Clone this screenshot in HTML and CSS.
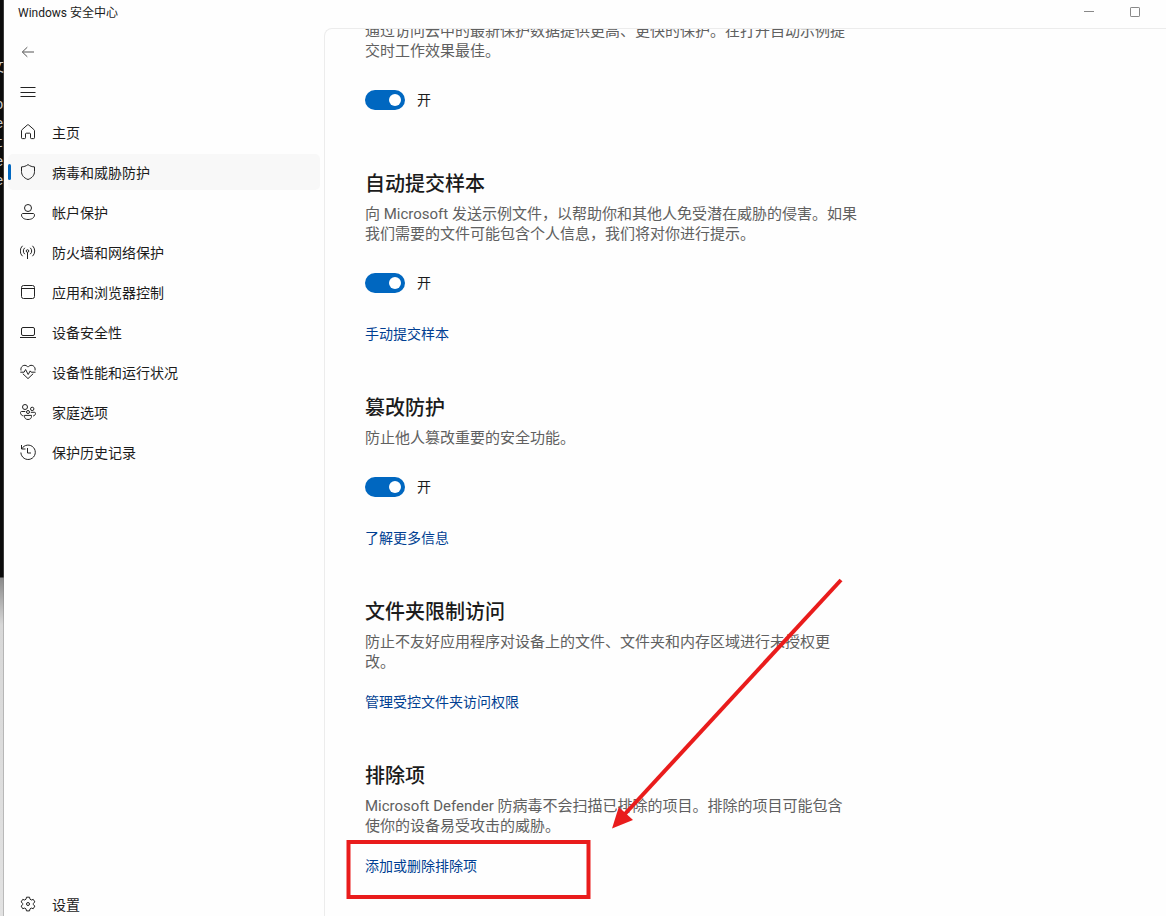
FILE: index.html
```
<!DOCTYPE html>
<html lang="zh-CN">

<head>
    <meta charset="UTF-8">
    <meta name="viewport" content="width=device-width, initial-scale=1.0">
    <title>Windows 安全中心</title>
    <link rel="stylesheet" href="styles.css">
</head>

<body>
    <!-- 窗口后面露出的终端 -->
    <div class="backdrop" aria-hidden="true">
        <div class="terminal">攵<br><br>o<br>e<br>t<br>e<br>e</div>
    </div>

    <div class="window">
        <header class="titlebar">
            <span class="titlebar-text">Windows 安全中心</span>
            <button class="caption-btn" type="button" aria-label="最小化">
                <svg width="10" height="10" viewBox="0 0 10 10"><path d="M0 4.5h10" /></svg>
            </button>
            <button class="caption-btn" type="button" aria-label="最大化">
                <svg width="10" height="10" viewBox="0 0 10 10"><rect x=".5" y=".5" width="9" height="9" rx=".6" /></svg>
            </button>
        </header>

        <div class="layout">
            <nav class="sidebar">
                <button class="nav-item back" type="button" aria-label="返回">
                    <svg class="icon" viewBox="0 0 16 16"><path d="M14 8H2.5M7.3 3.2 2.3 8l5 4.8" /></svg>
                </button>
                <button class="nav-item" type="button" aria-label="导航">
                    <svg class="icon" viewBox="0 0 16 16"><path d="M.5 3.5h15M.5 8.5h15M.5 12.5h15" /></svg>
                </button>
                <a class="nav-item" href="#">
                    <svg class="icon" viewBox="0 0 16 16"><path d="M1.5 6.8c0-.5.2-.9.6-1.2L7.300 1c.4-.4 1-.4 1.400 0l5.200 4.600c.4.3.6.7.6 1.200V13.800c0 .5-.3.8-.8.8h-2.400c-.5 0-.8-.3-.8-.8V10c0-.5-.3-.8-.8-.8H6.300c-.5 0-.8.3-.8.8v3.800c0 .5-.3.8-.8.8H2.300c-.5 0-.8-.3-.8-.8z" /></svg>
                    <span>主页</span>
                </a>
                <a class="nav-item active" href="#">
                    <svg class="icon" viewBox="0 0 16 16"><path d="M8 .6c2 1.500 4.100 2.200 6.500 2.300v4.600c0 3.700-2.200 6.400-6.500 8-4.300-1.600-6.500-4.300-6.500-8V2.900C3.900 2.800 6 2.100 8 .6z" /></svg>
                    <span>病毒和威胁防护</span>
                </a>
                <a class="nav-item" href="#">
                    <svg class="icon" viewBox="0 0 16 16"><circle cx="8" cy="4" r="3.500" /><path d="M3 9.500h10c.9 0 1.500.6 1.500 1.400 0 2.900-2.800 4.600-6.500 4.600s-6.500-1.700-6.500-4.600c0-.8.6-1.400 1.500-1.400z" /></svg>
                    <span>帐户保护</span>
                </a>
                <a class="nav-item" href="#">
                    <svg class="icon" viewBox="0 0 16 16"><circle cx="7.500" cy="7" r="1.300" /><path d="M7.500 8.300V15M4.800 10.200a4.200 4.200 0 0 1 0-6.400M10.200 10.200a4.200 4.200 0 0 0 0-6.400M2.500 12.200a7.200 7.200 0 0 1 0-10.400M12.500 12.200a7.200 7.200 0 0 0 0-10.400" /></svg>
                    <span>防火墙和网络保护</span>
                </a>
                <a class="nav-item" href="#">
                    <svg class="icon" viewBox="0 0 16 16"><rect x="1.500" y="1.500" width="13" height="13" rx="2" /><path d="M1.500 4.500h13" /></svg>
                    <span>应用和浏览器控制</span>
                </a>
                <a class="nav-item" href="#">
                    <svg class="icon" viewBox="0 0 16 16"><rect x="1.500" y="3.500" width="13" height="8" rx="1.500" /><path d="M0 13.500h16" /></svg>
                    <span>设备安全性</span>
                </a>
                <a class="nav-item" href="#">
                    <svg class="icon" viewBox="0 0 16 16"><path d="M1 6.500C0 2.500 4.500-.4 7.300 2.400l.7.700.7-.7C11.500-.4 16 2.500 15 6.500M2.800 9.700 8 14.600l5.200-4.900M.3 8.200h3.800l1.500-2.700 2.600 5 2-3.600 1 1.300h4.300" /></svg>
                    <span>设备性能和运行状况</span>
                </a>
                <a class="nav-item" href="#">
                    <svg class="icon" viewBox="0 0 16 16"><circle cx="5" cy="3" r="2.500" /><circle cx="12.200" cy="4.900" r="1.700" /><circle cx="8" cy="8" r="1.500" /><path d="M4.500 11.400h7v1c0 1.900-1.500 3.100-3.500 3.100s-3.500-1.200-3.500-3.100zM5.300 7.500H1.600c-.7 0-1.100.4-1.100 1 0 1.900 1.200 3.100 3 3.400M10.800 8.300h3.600c.7 0 1.100.4 1.100 1 0 1.500-.9 2.400-2.400 2.700" /></svg>
                    <span>家庭选项</span>
                </a>
                <a class="nav-item" href="#">
                    <svg class="icon" viewBox="0 0 16 16"><path d="M1.500 1v4h4M1.800 4.800A7.200 7.200 0 1 1 .9 8.500M7.500 4v5h3.500" /></svg>
                    <span>保护历史记录</span>
                </a>
                <a class="nav-item settings" href="#">
                    <svg class="icon" viewBox="0 0 16 16"><path d="M6.500 1.200h3l.5 2 1.300.8 2-.6 1.500 2.500-1.400 1.500v1.300l1.400 1.400-1.500 2.600-2-.6-1.300.8-.5 2h-3l-.5-2-1.300-.8-2 .6-1.500-2.600 1.400-1.400V7.400L1.200 5.900l1.500-2.500 2 .6L6 3.200z" /><circle cx="8" cy="8" r="1.500" /></svg>
                    <span>设置</span>
                </a>
            </nav>

            <main class="content">
                <section class="setting scrolled">
                    <p class="desc">通过访问云中的最新保护数据提供更高、更快的保护。在打开自动示例提交时工作效果最佳。</p>
                    <label class="toggle-row"><input class="toggle" type="checkbox" role="switch" checked>开</label>
                </section>

                <section class="setting">
                    <h2 class="heading">自动提交样本</h2>
                    <p class="desc">向 Microsoft 发送示例文件，以帮助你和其他人免受潜在威胁的侵害。如果我们需要的文件可能包含个人信息，我们将对你进行提示。</p>
                    <label class="toggle-row"><input class="toggle" type="checkbox" role="switch" checked>开</label>
                    <a class="link" href="#">手动提交样本</a>
                </section>

                <section class="setting">
                    <h2 class="heading">篡改防护</h2>
                    <p class="desc">防止他人篡改重要的安全功能。</p>
                    <label class="toggle-row"><input class="toggle" type="checkbox" role="switch" checked>开</label>
                    <a class="link" href="#">了解更多信息</a>
                </section>

                <section class="setting">
                    <h2 class="heading">文件夹限制访问</h2>
                    <p class="desc">防止不友好应用程序对设备上的文件、文件夹和内存区域进行未授权更改。</p>
                    <a class="link" href="#">管理受控文件夹访问权限</a>
                </section>

                <section class="setting">
                    <h2 class="heading">排除项</h2>
                    <p class="desc">Microsoft Defender 防病毒不会扫描已排除的项目。排除的项目可能包含<br>使你的设备易受攻击的威胁。</p>
                    <a class="link" href="#">添加或删除排除项</a>
                </section>
            </main>
        </div>
    </div>

    <!-- 红框和箭头标注 -->
    <svg class="annotation" width="500" height="330" viewBox="345 575 500 330" aria-hidden="true">
        <rect x="348.500" y="842" width="240" height="55" />
        <path d="M841 580 624 815" />
        <path class="arrow-head" d="M612 828.500 618.800 807 633 820z" />
    </svg>
</body>

</html>
```
FILE: styles.css
```
* {
    box-sizing: border-box;
}

body {
    margin: 0;
    height: 100vh;
    display: flex;
    overflow: hidden;
    position: relative;
    font-family: Roboto, "Noto Sans CJK SC", sans-serif;
    font-size: 14px;
    line-height: 20px;
    color: #1b1b1b;
    background: #fefefe;
}

/* 左侧背景 */
.backdrop {
    width: 4px;
    flex: none;
    overflow: hidden;
    background: linear-gradient(#0c0c0c 577px, #8a8a8a 578px, #d8d8d8 625px, #e2e2e2);
    box-shadow: inset -1px 0 rgba(128, 128, 128, 0.4);
}

.terminal {
    width: 20px;
    margin-left: -5px;
    padding-top: 58px;
    text-indent: -5px;
    font-family: "Liberation Mono", "Noto Sans CJK SC", monospace;
    line-height: 19px;
    color: #ccc;
}

/* 窗口 */
.window {
    flex: 1;
    min-width: 0;
    display: flex;
    flex-direction: column;
}

.titlebar {
    flex: none;
    height: 28px;
    display: flex;
    align-items: flex-start;
    padding: 0 8px 0 14px;
}

.titlebar-text {
    flex: 1;
    padding-top: 3px;
    font-size: 12px;
}

.caption-btn {
    width: 46px;
    height: 24px;
    padding: 0;
    border: 0;
    background: none;
    display: flex;
    align-items: center;
    justify-content: center;
}

.caption-btn svg {
    fill: none;
    stroke: #888;
}

.layout {
    flex: 1;
    min-height: 0;
    display: flex;
}

/* 导航栏 */
.sidebar {
    width: 320px;
    flex: none;
    display: flex;
    flex-direction: column;
    gap: 4px;
    padding: 6px 4px 0;
}

.nav-item {
    position: relative;
    flex: none;
    height: 36px;
    display: flex;
    align-items: center;
    gap: 16px;
    padding: 0 12px;
    border: 0;
    border-radius: 5px;
    background: none;
    color: inherit;
    font: inherit;
    text-decoration: none;
}

.nav-item span {
    padding-top: 1px;
}

.nav-item.active {
    background: #f8f8f8;
}

.nav-item.active::before {
    content: "";
    position: absolute;
    left: 0;
    top: 10px;
    width: 3px;
    height: 16px;
    border-radius: 2px;
    background: #0067c0;
}

.nav-item.settings {
    height: 24px;
    margin-top: auto;
}

.icon {
    width: 16px;
    height: 16px;
    flex: none;
    fill: none;
    stroke: #222;
    stroke-linejoin: round;
}

.back .icon {
    stroke: #555;
}

/* 设置内容 */
.content {
    flex: 1;
    min-width: 0;
    overflow: hidden;
    padding: 0 40px;
    border-top: 1px solid #ececec;
    border-left: 1px solid #ececec;
    border-top-left-radius: 8px;
}

.setting {
    max-width: 493px;
    margin-bottom: 50px;
}

.setting.scrolled {
    margin-top: -8px;
}

.heading {
    margin: 0 0 6px;
    font-size: 20px;
    font-weight: 500;
    line-height: 28px;
}

.desc {
    margin: 0;
    font-size: 15px;
    color: #606060;
}

.toggle-row {
    display: flex;
    align-items: center;
    gap: 12px;
    width: max-content;
    height: 40px;
    margin-top: 19px;
}

.toggle {
    appearance: none;
    width: 40px;
    height: 20px;
    margin: 0;
    padding: 4px;
    display: flex;
    justify-content: flex-end;
    border-radius: 10px;
    background: #0067c0;
}

.toggle::before {
    content: "";
    width: 12px;
    height: 12px;
    border-radius: 50%;
    background: #fff;
}

.toggle:not(:checked) {
    justify-content: flex-start;
    background: #888;
}

.link {
    display: block;
    width: max-content;
    margin-top: 21px;
    color: #003e92;
    text-decoration: none;
}

.desc + .link {
    margin-top: 20px;
}

/* 标注 */
.annotation {
    position: absolute;
    left: 345px;
    top: 575px;
    pointer-events: none;
    fill: none;
    stroke: #e91c1c;
    stroke-width: 4;
}

.arrow-head {
    fill: #e91c1c;
    stroke: none;
}
```
